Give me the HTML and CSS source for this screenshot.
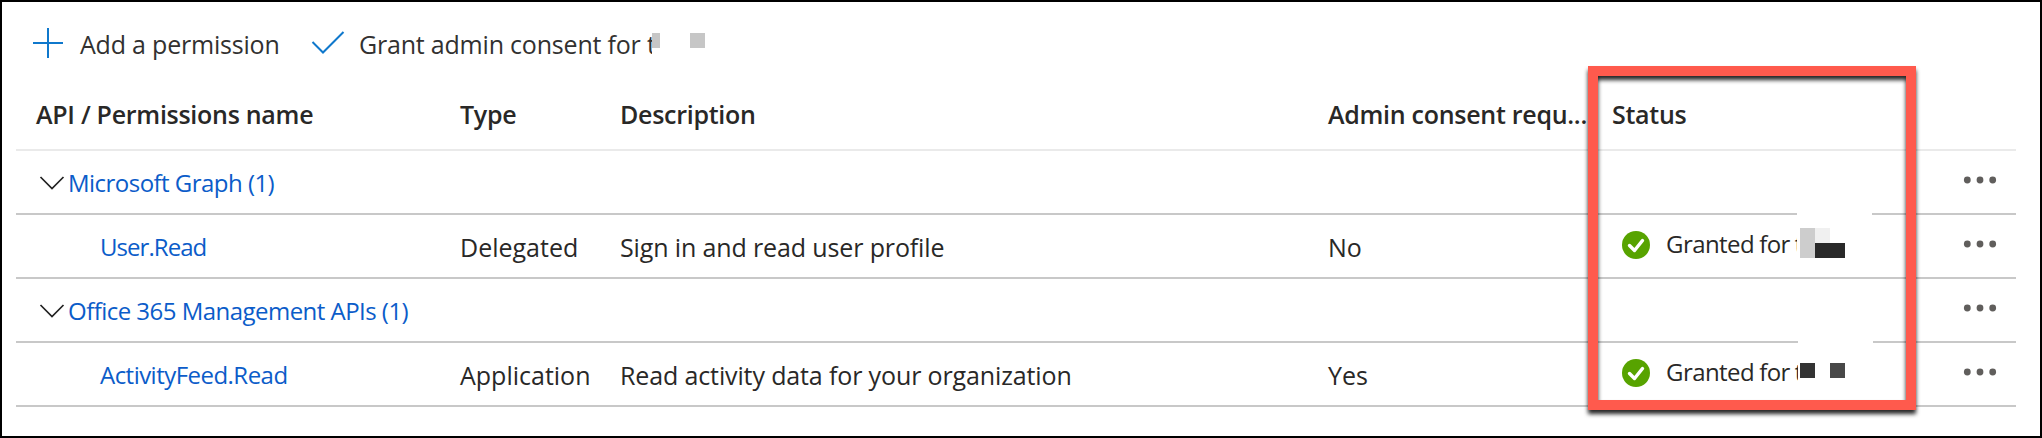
FILE: index.html
```
<!DOCTYPE html>
<html lang="en">
<head>
    <meta charset="UTF-8">
    <meta name="viewport" content="width=device-width, initial-scale=1.0">
    <title>API permissions</title>
    <link rel="stylesheet" href="styles.css">
</head>
<body>
    <div class="page">
        <div class="toolbar">
            <button class="command add">
                <svg width="30" height="30" viewBox="0 0 30 30"><path d="M15 0v30M0 15h30"/></svg>
                <span>Add a permission</span>
            </button>
            <button class="command grant">
                <svg width="34" height="24" viewBox="0 0 34 24"><path d="M1.5 12L12 22.5L32.5 2"/></svg>
                <span>Grant admin consent for t</span>
                <span class="mask mask-toolbar">
                    <svg width="60" height="30"><rect y="5" width="8" height="15" fill="#c6c6c6"/><rect x="38" y="5" width="15" height="15" fill="#c6c6c6"/></svg>
                </span>
            </button>
        </div>

        <div class="permissions">
            <div class="row header">
                <div class="cell first">API / Permissions name</div>
                <div class="cell">Type</div>
                <div class="cell">Description</div>
                <div class="cell">Admin consent requ...</div>
                <div class="cell">Status</div>
                <div class="cell"></div>
            </div>

            <div class="row group">
                <div class="cell name">
                    <svg class="chevron" width="26" height="14" viewBox="0 0 26 14"><path d="M1.5 1L13 12.5L24.5 1"/></svg>
                    <a class="link">Microsoft Graph (1)</a>
                </div>
                <div class="cell more">
                    <svg width="34" height="8" viewBox="0 0 34 8"><circle cx="4.3" cy="4" r="3.4"/><circle cx="17" cy="4" r="3.4"/><circle cx="29.7" cy="4" r="3.4"/></svg>
                </div>
            </div>

            <div class="row">
                <div class="cell child"><a class="link user-read">User.Read</a></div>
                <div class="cell">Delegated</div>
                <div class="cell description">Sign in and read user profile</div>
                <div class="cell">No</div>
                <div class="cell status">
                    <svg class="badge" width="28" height="28" viewBox="0 0 28 28"><circle cx="14" cy="14" r="14"/><path d="M7.5 14.5L12.5 19.5L20.5 9.5"/></svg>
                    <span>Granted for t</span>
                    <span class="mask mask-status">
                        <svg width="75" height="55"><rect x="3" y="16" width="15" height="30" fill="#cdcdcd"/><rect x="18" y="16" width="15" height="15" fill="#f0f0f0"/><rect x="18" y="31" width="30" height="15" fill="#292929"/></svg>
                    </span>
                </div>
                <div class="cell more">
                    <svg width="34" height="8" viewBox="0 0 34 8"><circle cx="4.3" cy="4" r="3.4"/><circle cx="17" cy="4" r="3.4"/><circle cx="29.7" cy="4" r="3.4"/></svg>
                </div>
            </div>

            <div class="row group">
                <div class="cell name">
                    <svg class="chevron" width="26" height="14" viewBox="0 0 26 14"><path d="M1.5 1L13 12.5L24.5 1"/></svg>
                    <a class="link">Office 365 Management APIs (1)</a>
                </div>
                <div class="cell more">
                    <svg width="34" height="8" viewBox="0 0 34 8"><circle cx="4.3" cy="4" r="3.4"/><circle cx="17" cy="4" r="3.4"/><circle cx="29.7" cy="4" r="3.4"/></svg>
                </div>
            </div>

            <div class="row">
                <div class="cell child"><a class="link">ActivityFeed.Read</a></div>
                <div class="cell">Application</div>
                <div class="cell description">Read activity data for your organization</div>
                <div class="cell">Yes</div>
                <div class="cell status">
                    <svg class="badge" width="28" height="28" viewBox="0 0 28 28"><circle cx="14" cy="14" r="14"/><path d="M7.5 14.5L12.5 19.5L20.5 9.5"/></svg>
                    <span>Granted for t</span>
                    <span class="mask mask-status second">
                        <svg width="75" height="55"><rect x="2" y="23" width="15" height="15" fill="#333333"/><rect x="32" y="23" width="15" height="15" fill="#484848"/></svg>
                    </span>
                </div>
                <div class="cell more">
                    <svg width="34" height="8" viewBox="0 0 34 8"><circle cx="4.3" cy="4" r="3.4"/><circle cx="17" cy="4" r="3.4"/><circle cx="29.7" cy="4" r="3.4"/></svg>
                </div>
            </div>
        </div>

        <div class="highlight"></div>
    </div>
</body>
</html>
```
FILE: styles.css
```
* {
    margin: 0;
    padding: 0;
    box-sizing: border-box;
}

body {
    background-color: #fff;
    color: #292827;
    font-family: 'Open Sans', 'Noto Sans', sans-serif;
    font-size: 25px;
}

svg {
    display: block;
    flex: none;
}

.page {
    position: relative;
    width: 2042px;
    height: 438px;
    border: 2px solid #000;
    padding: 0 24px 0 14px;
    overflow: hidden;
}

/* Toolbar */
.toolbar {
    display: flex;
    height: 84px;
    padding-left: 17px;
}

.command {
    position: relative;
    display: flex;
    align-items: center;
    height: 84px;
    border: none;
    background: none;
    color: #323130;
    font: inherit;
    letter-spacing: -0.2px;
    white-space: nowrap;
}

.command path {
    fill: none;
    stroke: #0f78cc;
    stroke-width: 2;
}

.add {
    width: 278px;
    gap: 17px;
}

.grant {
    gap: 14px;
    letter-spacing: -0.2px;
}

.add svg {
    margin-bottom: 2px;
}

.grant svg {
    margin-bottom: 4px;
}

/* Permissions table */
.row {
    display: grid;
    grid-template-columns: 444px 160px 708px 284px 320px 1fr;
    height: 64px;
    border-bottom: 2px solid #c8c8c8;
}

.row.header {
    height: 65px;
    padding-bottom: 8px;
    border-bottom-color: #eaeaea;
    font-weight: 600;
    letter-spacing: -0.28px;
}

.row.group {
    grid-template-columns: 1fr 84px;
}

.cell {
    position: relative;
    display: flex;
    align-items: center;
    white-space: nowrap;
    padding-top: 1px;
}

.first {
    padding-left: 20px;
}

.description {
    letter-spacing: -0.13px;
}

.name {
    padding-left: 23px;
    gap: 3px;
}

.child {
    padding-left: 84px;
}

.link {
    color: #0b5cc9;
    font-size: 24px;
    letter-spacing: -0.53px;
}

.user-read {
    letter-spacing: -0.95px;
}

.chevron path {
    fill: none;
    stroke: #222;
    stroke-width: 1.7;
}

.status {
    gap: 16px;
    padding: 0 0 3px 10px;
    font-size: 24px;
    letter-spacing: -0.55px;
    word-spacing: -0.7px;
}

.status span {
    padding-bottom: 2px;
}

.badge circle {
    fill: #57a300;
}

.badge path {
    fill: none;
    stroke: #fff;
    stroke-width: 3.4;
    stroke-linecap: round;
    stroke-linejoin: round;
}

.more {
    padding: 0 0 4px 31px;
}

.more circle {
    fill: #605e5c;
}

/* Hidden tenant name */
.mask {
    position: absolute;
    background-color: #fff;
}

.mask-toolbar {
    left: 341px;
    top: 26px;
}

.mask-status {
    left: 185px;
    top: -3px;
}

.mask-status.second {
    left: 186px;
}

/* Red callout around the status column */
.highlight {
    position: absolute;
    left: 1586px;
    top: 64px;
    width: 328px;
    height: 344px;
    border: 10px solid #ff5a4d;
    filter: drop-shadow(0 4px 2px rgba(0, 0, 0, 0.85));
}
```
